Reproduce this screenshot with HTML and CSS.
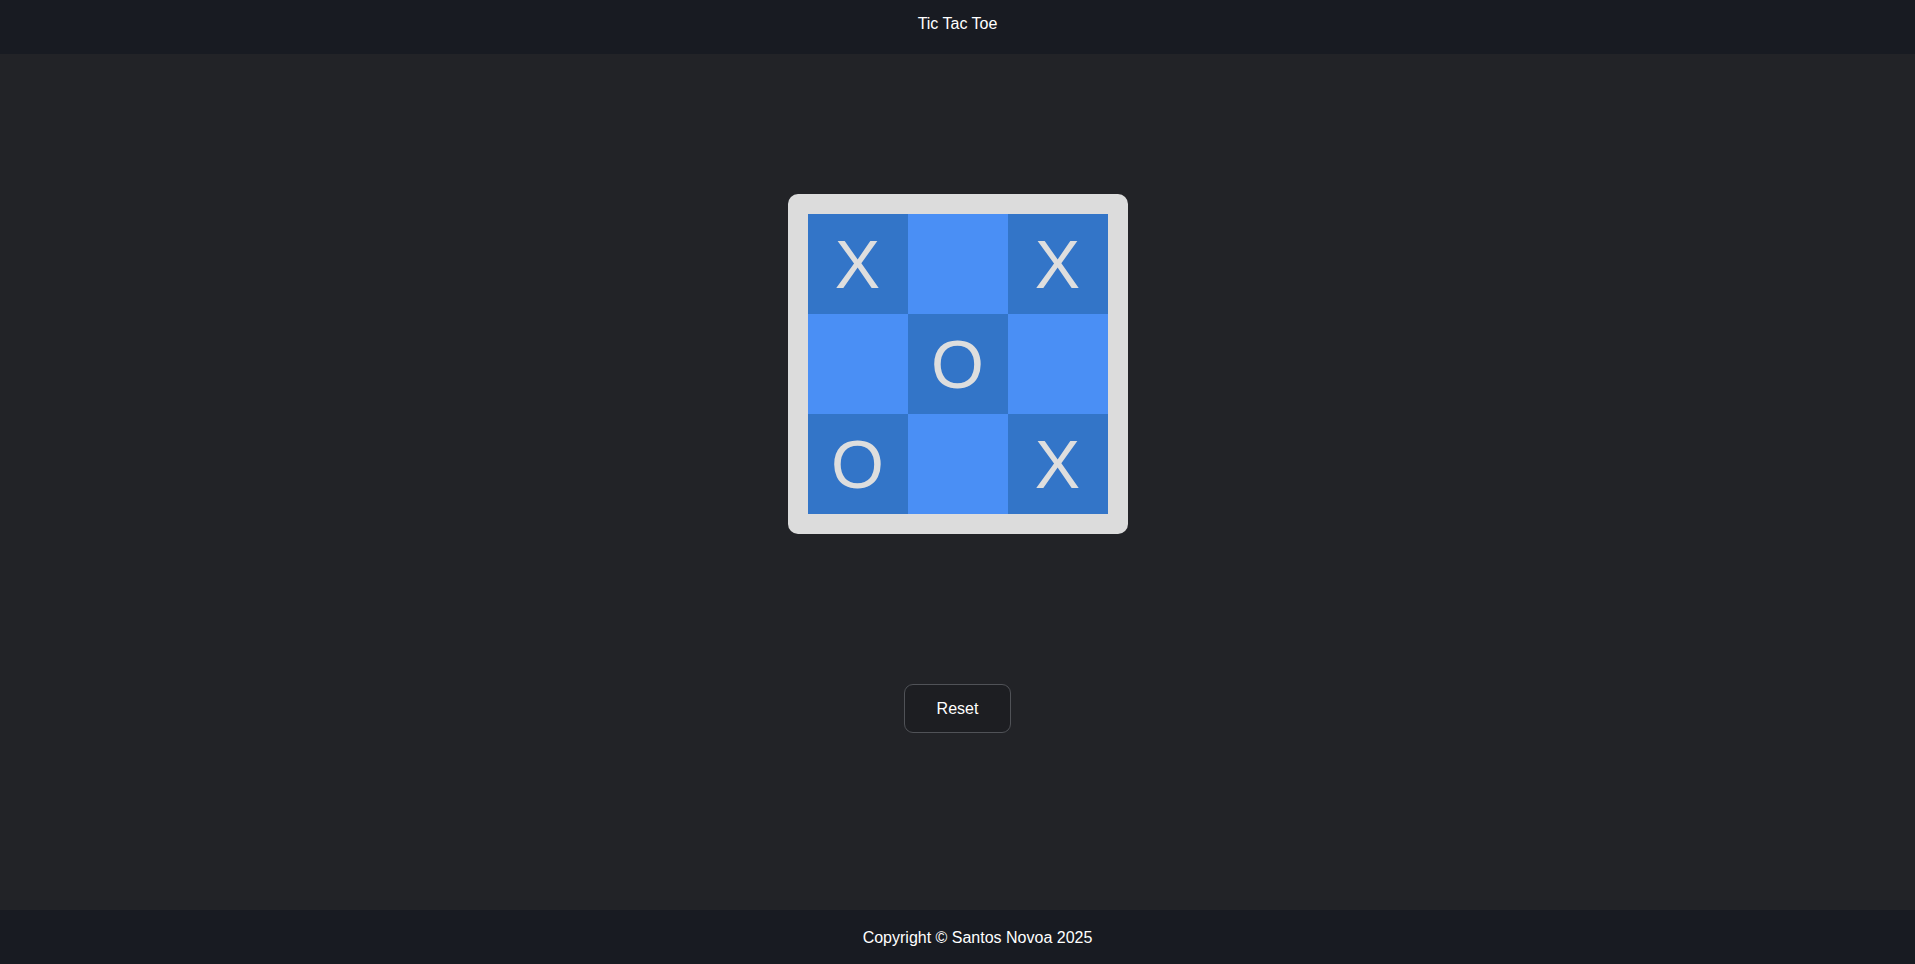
FILE: index.html
```html
<!DOCTYPE html>
<html lang="en">
<head>
<meta charset="utf-8">
<title>Tic Tac Toe</title>
<link rel="stylesheet" href="styles.css">
</head>
<body>
<header class="top-bar">Tic Tac Toe</header>
<main class="game">
  <div class="board">
    <div class="cell dark">X</div>
    <div class="cell light"></div>
    <div class="cell dark">X</div>
    <div class="cell light"></div>
    <div class="cell dark">O</div>
    <div class="cell light"></div>
    <div class="cell dark">O</div>
    <div class="cell light"></div>
    <div class="cell dark">X</div>
  </div>
  <button class="reset">Reset</button>
</main>
<footer class="bottom-bar">Copyright © Santos Novoa 2025</footer>
</body>
</html>
```
FILE: styles.css
```css
html, body {
  margin: 0;
  height: 100%;
}
body {
  display: flex;
  flex-direction: column;
  background: #222327;
  color: #ffffff;
  font-family: "Liberation Sans", Arial, sans-serif;
  font-size: 16px;
}
.top-bar {
  height: 54px;
  box-sizing: border-box;
  flex: none;
  padding-top: 15px;
  text-align: center;
  background: #181b22;
}
.game {
  flex: 1;
  display: flex;
  flex-direction: column;
  align-items: center;
  padding-top: 140px;
}
.board {
  display: grid;
  grid-template-columns: repeat(3, 100px);
  grid-template-rows: repeat(3, 100px);
  padding: 20px;
  background: #dcdcdc;
  border-radius: 10px;
}
.cell {
  display: flex;
  align-items: center;
  justify-content: center;
  font-size: 68px;
  color: #dedede;
  line-height: 1;
}
.cell.dark { background: #3375c8; }
.cell.light { background: #4a8ff5; }
.reset {
  margin-top: 150px;
  width: 107px;
  height: 49px;
  background: #1d1e22;
  color: #ffffff;
  border: 1px solid #505257;
  border-radius: 9px;
  font-family: "Liberation Sans", Arial, sans-serif;
  font-size: 16px;
}
.bottom-bar {
  height: 54px;
  box-sizing: border-box;
  flex: none;
  padding-top: 19px;
  padding-left: 40px;
  text-align: center;
  background: #181b22;
}
```
